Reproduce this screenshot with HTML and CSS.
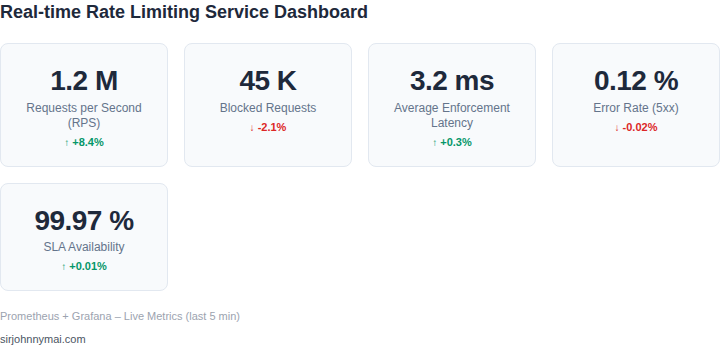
FILE: index.html
```html
<!DOCTYPE html>
<html lang="en">
<head>
    <meta charset="UTF-8">
    <meta name="viewport" content="width=device-width, initial-scale=1.0">
    <title>Real-time Rate Limiting Service Dashboard</title>
    <link rel="stylesheet" href="styles.css">
</head>
<body>
    <h1 class="title">Real-time Rate Limiting Service Dashboard</h1>

    <div class="grid">
        <div class="card">
            <div class="value">1.2 M</div>
            <div class="label">Requests per Second (RPS)</div>
            <div class="change up"><span class="arrow">↑</span> +8.4%</div>
        </div>
        <div class="card">
            <div class="value">45 K</div>
            <div class="label">Blocked Requests</div>
            <div class="change down"><span class="arrow">↓</span> -2.1%</div>
        </div>
        <div class="card">
            <div class="value">3.2 ms</div>
            <div class="label">Average Enforcement Latency</div>
            <div class="change up"><span class="arrow">↑</span> +0.3%</div>
        </div>
        <div class="card">
            <div class="value">0.12 %</div>
            <div class="label">Error Rate (5xx)</div>
            <div class="change down"><span class="arrow">↓</span> -0.02%</div>
        </div>
        <div class="card">
            <div class="value">99.97 %</div>
            <div class="label">SLA Availability</div>
            <div class="change up"><span class="arrow">↑</span> +0.01%</div>
        </div>
    </div>

    <p class="source">Prometheus + Grafana – Live Metrics (last 5 min)</p>
    <p class="credit">sirjohnnymai.com</p>
</body>
</html>
```

FILE: styles.css
```css
* {
    margin: 0;
    padding: 0;
    box-sizing: border-box;
}

body {
    font-family: 'Liberation Sans', Arial, sans-serif;
    background: #fff;
    color: #1e293b;
}

.title {
    font-size: 18px;
    font-weight: bold;
    line-height: 24px;
    color: #1e293b;
}

.grid {
    display: grid;
    grid-template-columns: repeat(4, 1fr);
    gap: 16px;
    margin-top: 19px;
}

.card {
    background: #f8fafc;
    border: 1px solid #e2e8f0;
    border-radius: 8px;
    padding: 20px 12px 16px;
    text-align: center;
}

.value {
    font-size: 28px;
    font-weight: bold;
    line-height: 1.2;
    letter-spacing: -0.5px;
    color: #1e293b;
    margin-bottom: 3px;
}

.label {
    font-size: 12px;
    line-height: 15px;
    color: #64748b;
}

.change {
    font-size: 11px;
    font-weight: bold;
    line-height: 15px;
    margin-top: 4px;
}

.change .arrow {
    font-size: 10px;
    font-weight: normal;
}

.up {
    color: #059669;
}

.down {
    color: #dc2626;
}

.source {
    font-size: 11px;
    color: #9ca3af;
    margin-top: 19px;
}

.credit {
    font-size: 11px;
    color: #4b5563;
    margin-top: 11px;
}
```
